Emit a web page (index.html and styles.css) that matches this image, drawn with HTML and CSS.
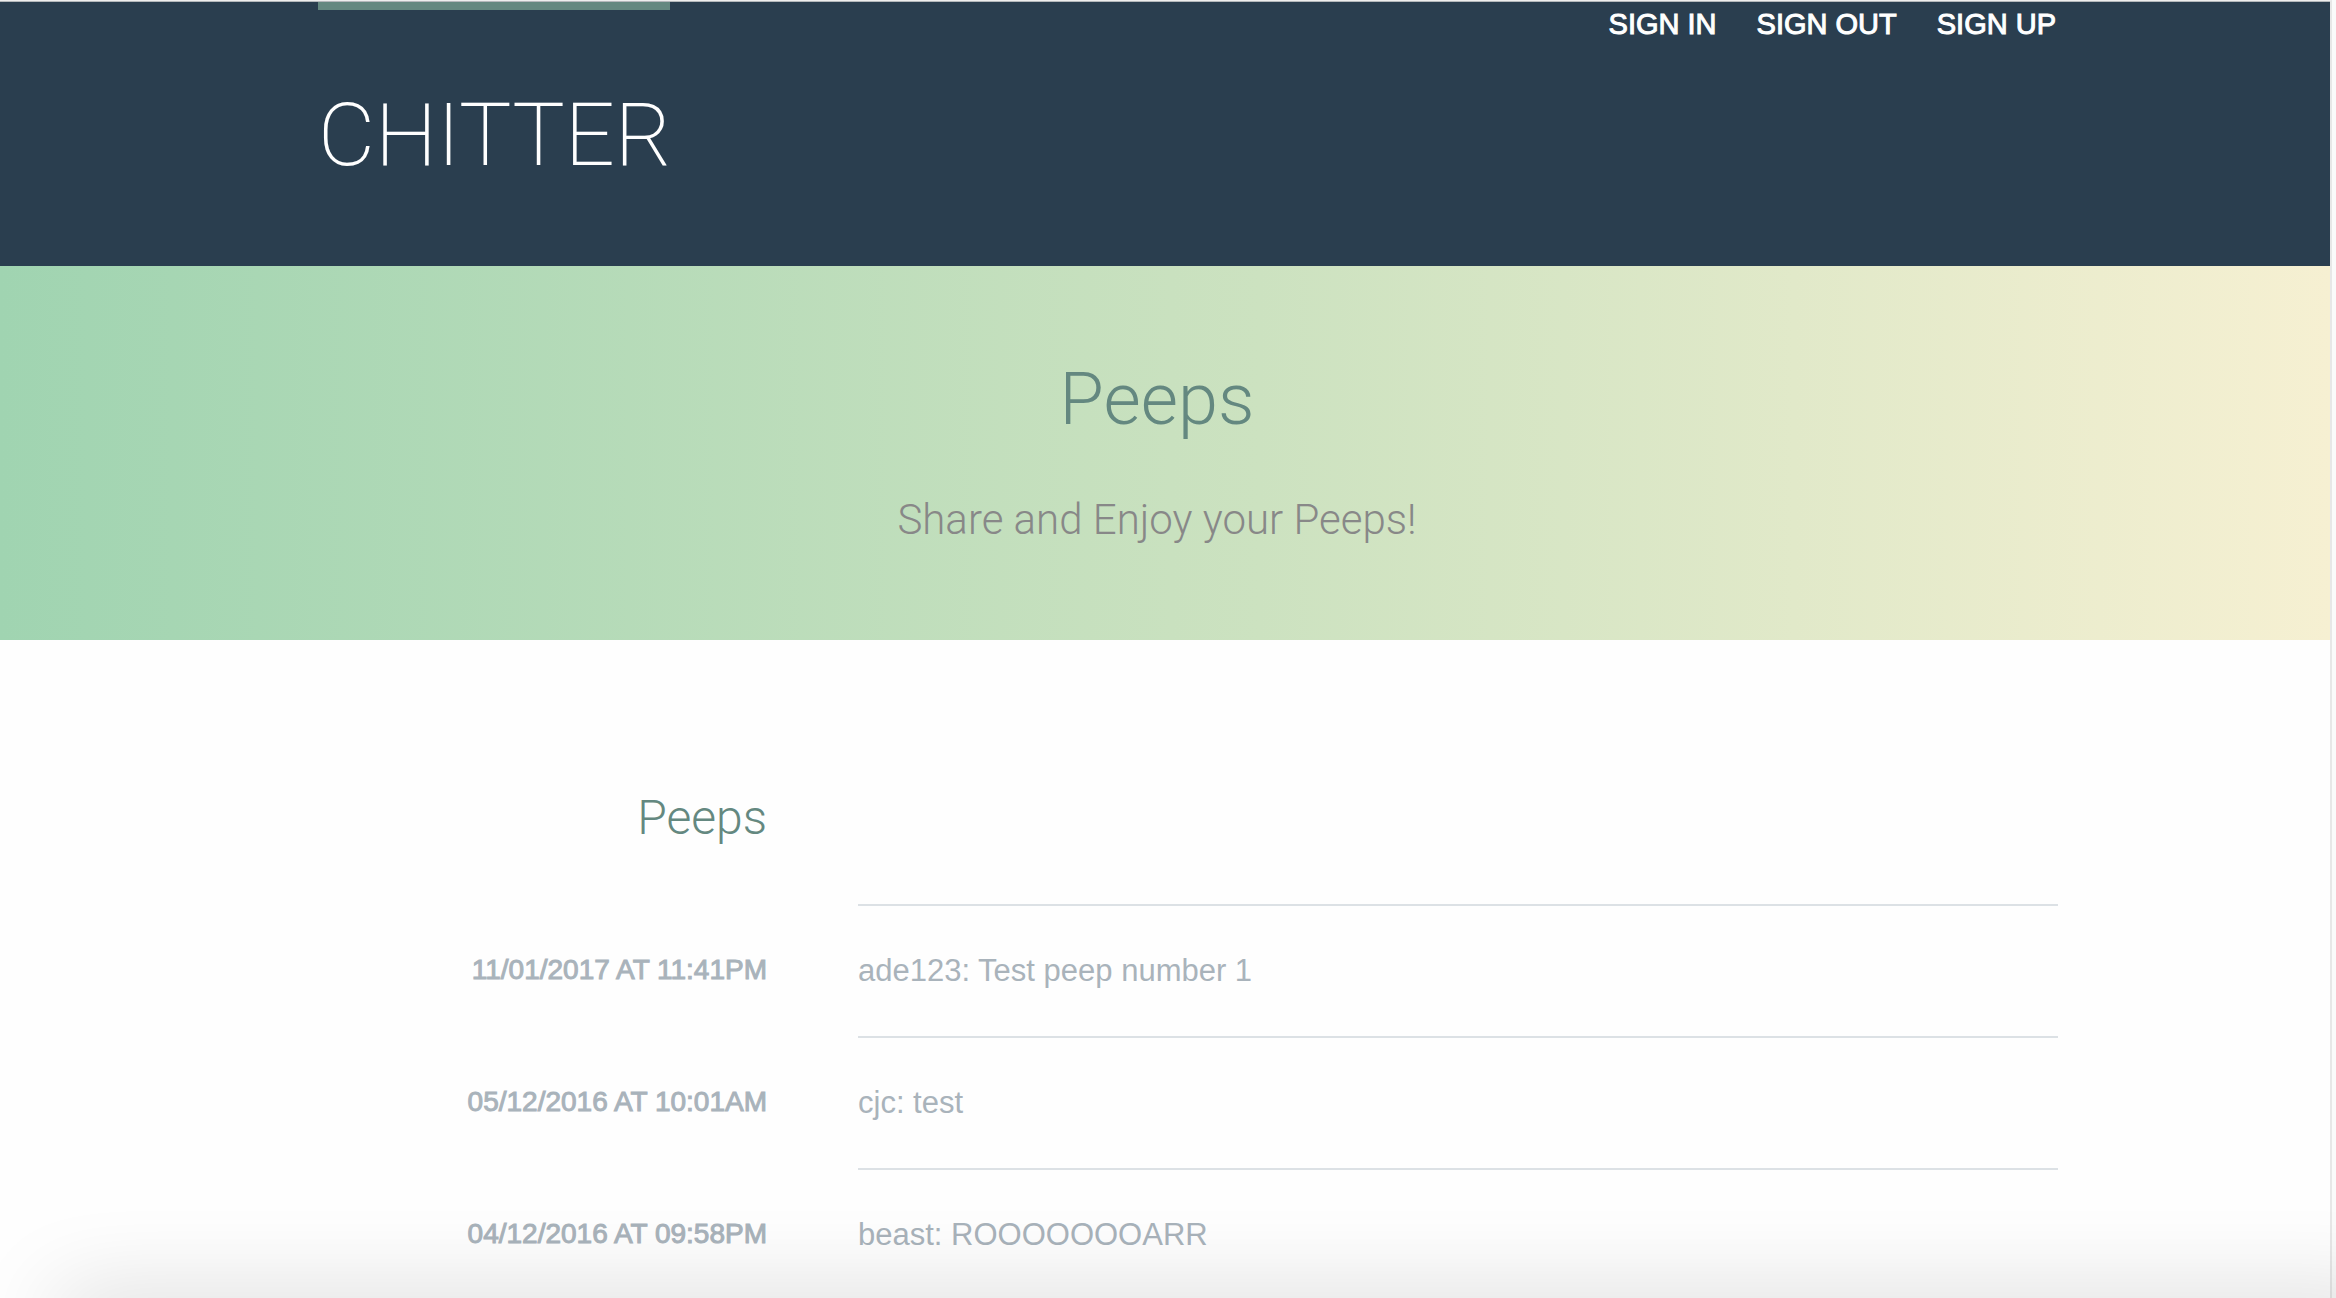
FILE: index.html
```
<!DOCTYPE html>
<html lang="en">
<head>
<meta charset="utf-8">
<title>Chitter</title>
<link rel="stylesheet" href="styles.css">
</head>
<body>
<div class="page">
  <header class="site-header">
    <h1 class="logo"><a href="#">CHITTER</a></h1>
    <nav class="nav">
      <a href="#">SIGN IN</a>
      <a href="#">SIGN OUT</a>
      <a href="#">SIGN UP</a>
    </nav>
  </header>
  <section class="hero">
    <h2 class="hero-title">Peeps</h2>
    <p class="hero-text">Share and Enjoy your Peeps!</p>
  </section>
  <main class="peeps">
    <h3 class="peeps-title">Peeps</h3>
    <ul class="peep-list">
      <li class="peep">
        <time class="peep-time" datetime="2017-01-11T23:41">11/01/2017 AT 11:41PM</time>
        <p class="peep-text">ade123: Test peep number 1</p>
      </li>
      <li class="peep">
        <time class="peep-time" datetime="2016-12-05T10:01">05/12/2016 AT 10:01AM</time>
        <p class="peep-text">cjc: test</p>
      </li>
      <li class="peep">
        <time class="peep-time" datetime="2016-12-04T21:58">04/12/2016 AT 09:58PM</time>
        <p class="peep-text">beast: ROOOOOOOARR</p>
      </li>
    </ul>
  </main>
</div>
<div class="bottom-shade"></div>
</body>
</html>
```
FILE: styles.css
```
* {
  box-sizing: border-box;
}

html,
body {
  height: 100%;
}

body {
  margin: 0;
  overflow: hidden;
  font-family: Roboto, "Liberation Sans", sans-serif;
  font-weight: 300;
  background: #fafafa;
}

h1,
h2,
h3,
p,
ul {
  margin: 0;
  padding: 0;
  font-weight: inherit;
}

a {
  color: inherit;
  text-decoration: none;
}

.page {
  min-height: 100%;
  margin-right: 4px;
  border-top: 1px solid #eee;
  border-right: 2px solid #e7e7e7;
  background: #fefefe;
}

.site-header {
  display: flex;
  justify-content: space-between;
  align-items: flex-start;
  height: 265px;
  padding: 0 274px 0 318px;
  border-top: 1px solid #b4b8bb;
  background: #2a3e4f;
  color: #fff;
}

.logo {
  width: 352px;
  border-top: 8px solid #648880;
  font-size: 88px;
  font-weight: 200;
  line-height: 104px;
  padding-top: 73px;
}

.nav {
  display: flex;
  gap: 40px;
  font: 400 29px/44px "Liberation Sans", Arial, sans-serif;
  -webkit-text-stroke: 1px currentColor;
}

.hero {
  height: 374px;
  padding: 84px 16px 0 0;
  text-align: center;
  background: linear-gradient(90deg, #a0d4b1, #cce2c0 54%, #f6f0d2);
}

.hero-title {
  font-size: 72px;
  line-height: 100px;
  color: #648880;
}

.hero-text {
  padding-top: 40px;
  font-size: 42px;
  line-height: 60px;
  color: #888;
}

.peeps {
  padding: 146px 272px 0 318px;
}

.peeps-title {
  width: 449px;
  font-size: 48px;
  line-height: 64px;
  text-align: right;
  color: #648880;
}

.peep-list {
  padding-top: 54px;
  list-style: none;
}

.peep {
  display: grid;
  grid-template-columns: 449px 1fr;
  column-gap: 91px;
  font-family: "Liberation Sans", Arial, sans-serif;
  font-weight: 400;
  color: #a9b3bb;
}

.peep-time {
  font-size: 28px;
  line-height: 132px;
  text-align: right;
  -webkit-text-stroke: 1px currentColor;
}

.peep-text {
  border-top: 2px solid #dce1e5;
  font-size: 31px;
  line-height: 130px;
}

.bottom-shade {
  position: absolute;
  right: -60px;
  bottom: -50px;
  left: 58px;
  height: 50px;
  box-shadow: 0 0 90px rgba(0, 0, 0, .18);
}
```
